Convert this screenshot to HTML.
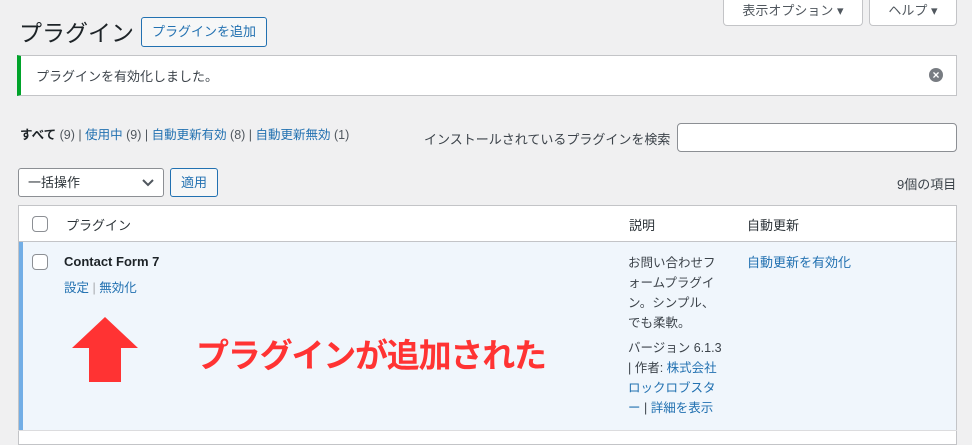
<!DOCTYPE html>
<html><head><meta charset="utf-8"><style>
*{box-sizing:border-box;margin:0;padding:0}
body{width:972px;height:440px;overflow:hidden;background:#f0f0f1;font-family:"Liberation Sans","Noto Sans CJK JP",sans-serif;font-size:13px;color:#3c434a;position:relative}
.a{position:absolute}
a{color:#2271b1;text-decoration:none}
.tab{top:-1px;height:27px;background:#fff;border:1px solid #c3c4c7;border-top:none;border-radius:0 0 4px 4px;font-size:13px;color:#50575e;text-align:center;line-height:24px}
</style></head><body>
<div class="a tab" style="left:723px;width:140px">表示オプション ▾</div>
<div class="a tab" style="left:869px;width:88px">ヘルプ ▾</div>
<div class="a" style="left:19px;top:14px;font-size:23px;color:#1d2327">プラグイン</div>
<div class="a" style="left:141px;top:17px;width:126px;height:30px;border:1px solid #2271b1;border-radius:3px;background:#f6f7f7;color:#2271b1;font-size:13px;line-height:28px;text-align:center">プラグインを追加</div>
<div class="a" style="left:17px;top:55px;width:940px;height:41px;background:#fff;border:1px solid #c3c4c7;border-left:4px solid #00a32a"></div>
<div class="a" style="left:36px;top:66px;font-size:13px;color:#3c434a">プラグインを有効化しました。</div>
<div class="a" style="left:929px;top:68px;width:14px;height:14px;border-radius:50%;background:#787c82;color:#fff;font-size:12px;line-height:14px;text-align:center;font-weight:bold">×</div>
<div class="a" style="left:20px;top:124px;font-size:12.5px;color:#50575e"><b style="color:#1d2327">すべて</b> (9) | <a>使用中</a> (9) | <a>自動更新有効</a> (8) | <a>自動更新無効</a> (1)</div>
<div class="a" style="left:424px;top:129px;font-size:13px;color:#3c434a">インストールされているプラグインを検索</div>
<div class="a" style="left:677px;top:123px;width:280px;height:29px;background:#fff;border:1px solid #8c8f94;border-radius:4px"></div>
<div class="a" style="left:18px;top:168px;width:146px;height:29px;background:#fff;border:1px solid #8c8f94;border-radius:3px;padding-left:9px;line-height:27px;font-size:13px;color:#2c3338">一括操作<svg style="position:absolute;right:9px;top:10px" width="12" height="8"><path d="M1 1l5 5 5-5" stroke="#50575e" stroke-width="2" fill="none"/></svg></div>
<div class="a" style="left:170px;top:168px;width:48px;height:29px;border:1px solid #2271b1;border-radius:3px;background:#f6f7f7;color:#2271b1;text-align:center;line-height:27px">適用</div>
<div class="a" style="left:897px;top:174px;color:#3c434a">9個の項目</div>
<div class="a" style="left:18px;top:205px;width:939px;height:240px;background:#fff;border:1px solid #c3c4c7"></div>
<div class="a" style="left:18px;top:241px;width:939px;height:1px;background:#c3c4c7"></div>
<div class="a" style="left:32px;top:216px;width:16px;height:16px;border:1px solid #8c8f94;border-radius:4px;background:#fff"></div>
<div class="a" style="left:66px;top:215px;color:#2c3338;font-size:13px">プラグイン</div>
<div class="a" style="left:629px;top:215px;color:#2c3338">説明</div>
<div class="a" style="left:747px;top:215px;color:#2c3338">自動更新</div>
<div class="a" style="left:19px;top:242px;width:937px;height:188px;background:#f0f6fc;border-left:4px solid #72aee6"></div>
<div class="a" style="left:18px;top:430px;width:939px;height:1px;background:#dcdcde"></div>
<div class="a" style="left:32px;top:254px;width:16px;height:16px;border:1px solid #8c8f94;border-radius:4px;background:#fff"></div>
<div class="a" style="left:64px;top:254px;font-weight:bold;color:#1d2327;font-size:13px">Contact Form 7</div>
<div class="a" style="left:64px;top:277px;font-size:12.5px;color:#a7aaad"><a>設定</a> | <a>無効化</a></div>
<div class="a" style="left:628px;top:253px;width:98px;line-height:20px;font-size:12.5px;color:#3c434a">お問い合わせフォームプラグイン。シンプル、でも柔軟。</div>
<div class="a" style="left:628px;top:338px;width:98px;line-height:20px;font-size:12.5px;color:#3c434a">バージョン 6.1.3 | 作者: <a>株式会社ロックロブスター</a> | <a>詳細を表示</a></div>
<div class="a" style="left:747px;top:253px;line-height:20px"><a>自動更新を有効化</a></div>
<svg class="a" style="left:72px;top:317px" width="66" height="65"><polygon points="33,0 66,31 49,31 49,65 17,65 17,31 0,31" fill="#ff3333"/></svg>
<div class="a" style="left:196px;top:329px;font-size:33px;font-weight:bold;color:#ff3333;letter-spacing:-1.2px">プラグインが追加された</div>
</body></html>
